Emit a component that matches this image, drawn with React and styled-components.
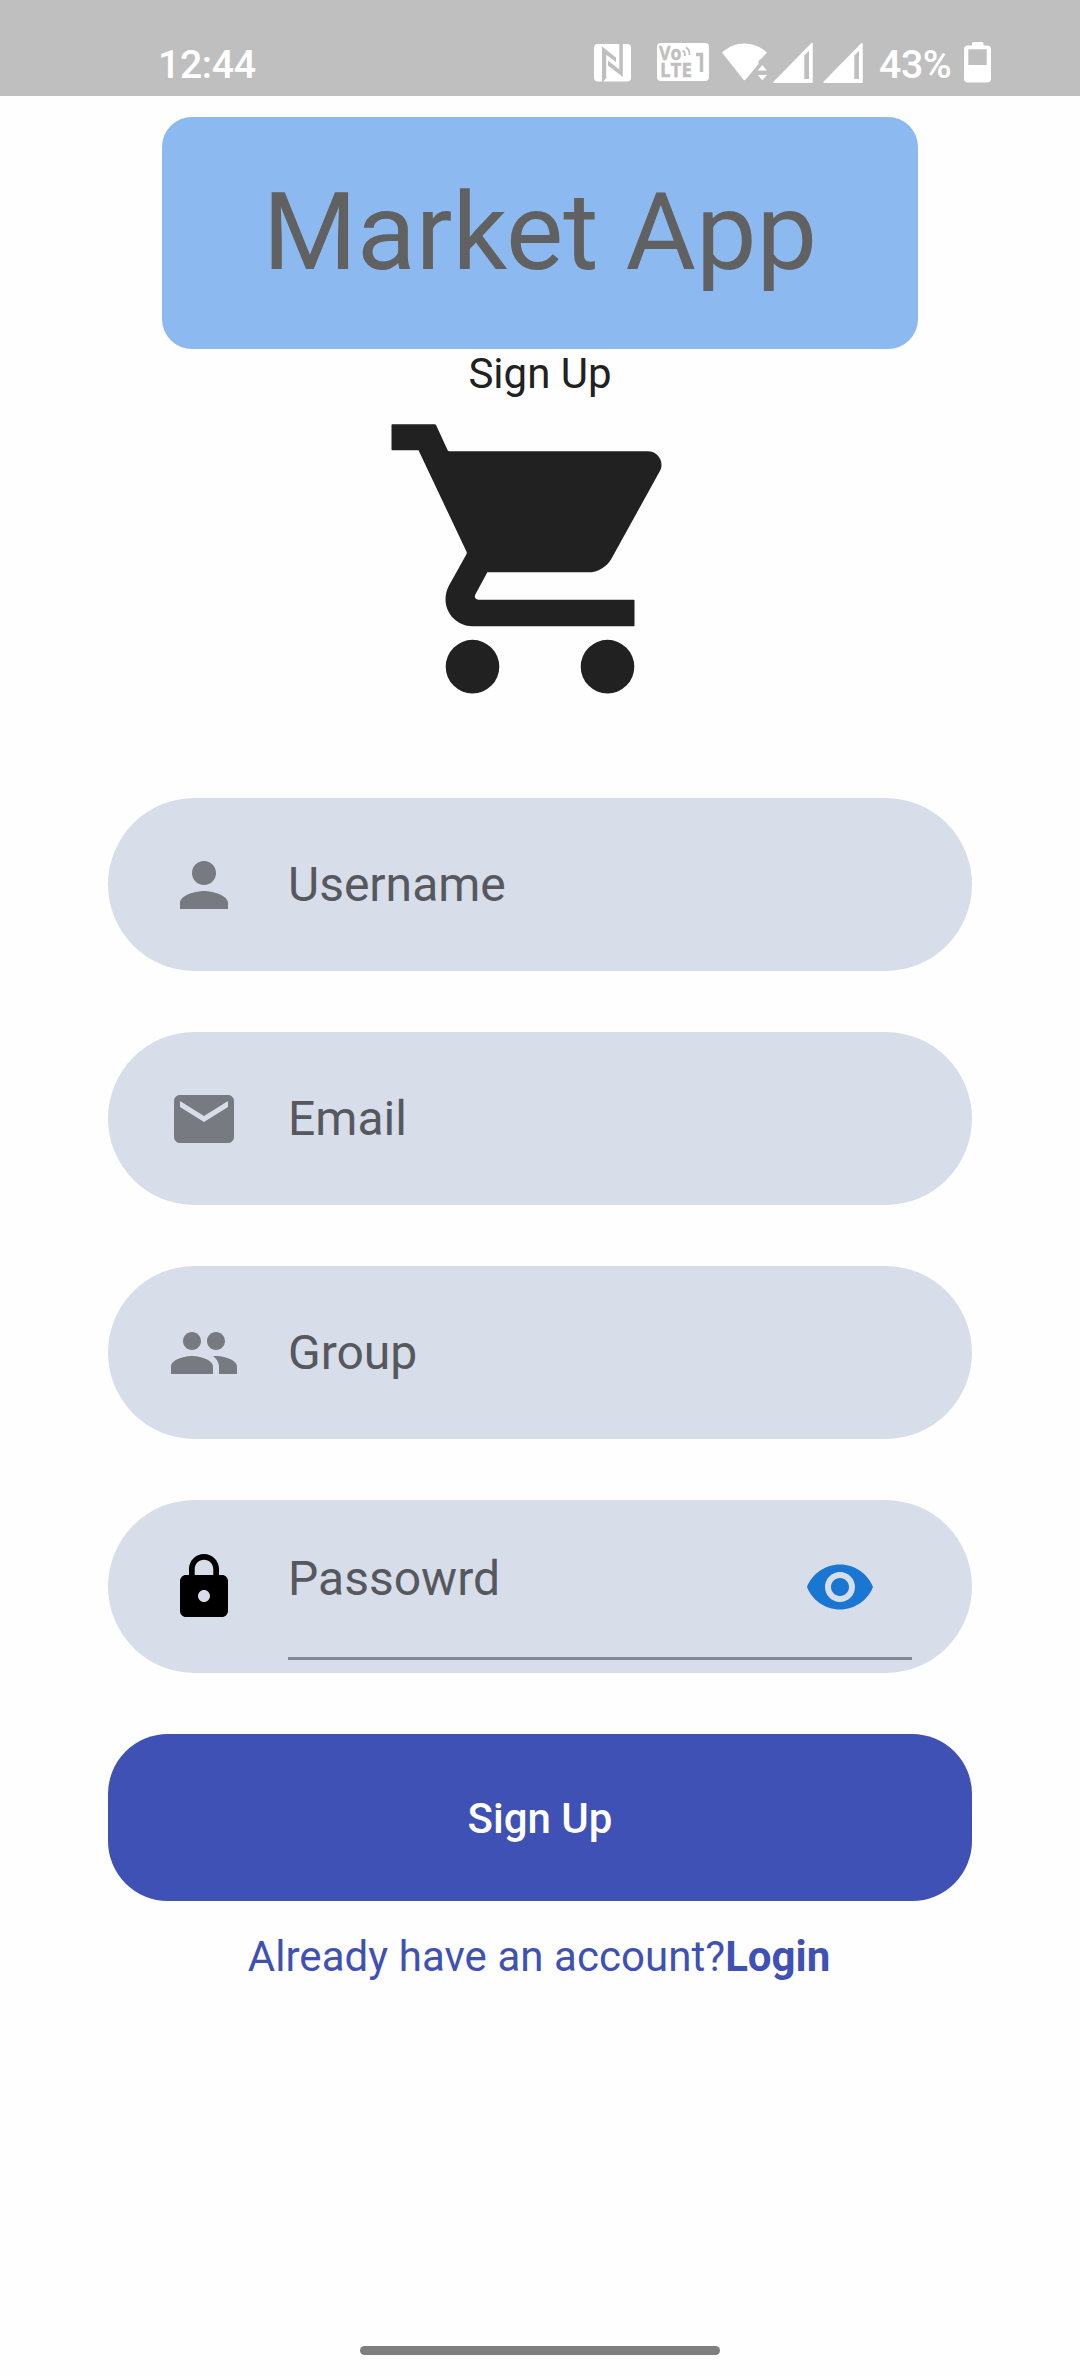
import React from "react";
import styled, { createGlobalStyle } from "styled-components";

const GlobalStyle = createGlobalStyle`
  *, *::before, *::after { box-sizing: border-box; }
  body { margin: 0; background: #fff; font-family: Roboto, "Noto Sans", sans-serif; }
  svg { display: block; flex: none; }
`;

const Screen = styled.div`
  display: flex;
  flex-direction: column;
  align-items: center;
  width: 1080px;
  height: 2376px;
  background: #fefefe;
`;

const StatusBar = styled.header`
  display: flex;
  align-items: flex-start;
  justify-content: space-between;
  width: 100%;
  height: 96px;
  padding: 40px 88px 0 158px;
  background: #bfbfbf;
  color: #fff;
`;

const StatusText = styled.span`
  width: ${(p) => p.$width}px;
  font-size: 39.3px;
  font-weight: 500;
  line-height: 50px;
  letter-spacing: -0.4px;
`;

const StatusIcons = styled.div`
  display: flex;
  align-items: flex-start;
  height: 48px;
`;

const IconSlot = styled.span`
  margin-right: ${(p) => p.$gap}px;
`;

const Banner = styled.h1`
  display: flex;
  align-items: center;
  justify-content: center;
  width: 756px;
  height: 232px;
  margin: 21px 0 0;
  padding-bottom: 2px;
  border-radius: 30px;
  background: #8cb9f0;
  color: #616161;
  font-size: 108px;
  font-weight: 400;
  line-height: 1.17;
`;

const Subtitle = styled.h2`
  height: 48px;
  margin: 0;
  color: #212121;
  font-size: 42px;
  font-weight: 400;
  line-height: 49px;
`;

const Form = styled.form`
  display: flex;
  flex-direction: column;
  gap: 61px;
  width: 864px;
  margin-top: 77px;
`;

const Field = styled.label`
  display: flex;
  align-items: center;
  height: 173px;
  padding: 0 60px;
  border-radius: 87px;
  background: #d7dde9;
  color: ${(p) => p.$iconColor || "#777a80"};
`;

const Input = styled.div`
  display: flex;
  align-items: center;
  flex: 1;
  height: 100%;
  margin-left: 48px;
  color: #56585d;
  font-size: 48px;
  line-height: 57px;
`;

const UnderlinedInput = styled(Input)`
  align-self: flex-start;
  justify-content: space-between;
  height: 160px;
  padding-right: 36px;
  border-bottom: 3px solid #868992;
`;

const VisibilityToggle = styled.span`
  margin-top: 17px;
  color: #1976d2;
`;

const SubmitButton = styled.button`
  height: 167px;
  padding: 2px 0 0;
  border: 0;
  border-radius: 60px;
  background: #3f51b5;
  color: #fff;
  font-family: inherit;
  font-size: 42px;
  font-weight: 500;
`;

const LoginPrompt = styled.p`
  margin: 31px 0 0;
  padding-right: 2px;
  color: #3f51b5;
  font-size: 42px;
  line-height: 49px;
  letter-spacing: 0.05px;
  white-space: nowrap;
`;

const LoginLink = styled.a`
  font-weight: 700;
  letter-spacing: 0;
`;

const NavHandle = styled.div`
  width: 360px;
  height: 9px;
  margin: auto 0 21px;
  border-radius: 5px;
  background: #7f7f7f;
`;

const Glyph = ({ d, size = 72, fill = "currentColor", viewBox = "0 0 24 24" }) => (
  <svg width={size} height={size} viewBox={viewBox} fill={fill}>
    <path d={d} />
  </svg>
);

const paths = {
  cart: "M7 17.95a1.98 1.98 0 1 0 0 3.97 1.98 1.98 0 1 0 0-3.97zM1.07 1.97Q1 1.97 1 2.04V3.83Q1 3.9 1.07 3.9H3L6.55 11.4Q6.6 11.5 6.55 11.61L5.25 13.95C5.09 14.25 5 14.61 5 14.95C5 16.05 5.9 16.95 7 16.95H18.93Q19 16.95 19 16.88V15.04Q19 14.97 18.93 14.97H7.42C7.28 14.97 7.17 14.86 7.17 14.72L7.2 14.6L8.1 12.95H15.55C16.3 12.95 16.96 12.54 17.3 11.92L20.88 5.45C20.96 5.31 21 5.14 21 4.97C21 4.42 20.55 3.97 20 3.97H5.3Q5.2 3.97 5.15 3.88L4.3 2.04Q4.27 1.97 4.2 1.97zM17 17.95a1.98 1.98 0 1 0 0 3.97 1.98 1.98 0 1 0 0-3.97z",
  person:
    "M12 12c2.21 0 4-1.79 4-4s-1.79-4-4-4-4 1.79-4 4 1.79 4 4 4zm0 2c-2.67 0-8 1.34-8 4v2h16v-2c0-2.66-5.33-4-8-4z",
  mail: "M20 4H4c-1.1 0-1.99.9-1.99 2L2 18c0 1.1.9 2 2 2h16c1.1 0 2-.9 2-2V6c0-1.1-.9-2-2-2zm0 4l-8 5-8-5V6l8 5 8-5v2z",
  people:
    "M16 11c1.66 0 2.99-1.34 2.99-3S17.66 5 16 5c-1.66 0-3 1.34-3 3s1.34 3 3 3zm-8 0c1.66 0 2.99-1.34 2.99-3S9.66 5 8 5C6.34 5 5 6.34 5 8s1.34 3 3 3zm0 2c-2.33 0-7 1.17-7 3.5V19h14v-2.5c0-2.33-4.67-3.5-7-3.5zm8 0c-.29 0-.62.02-.97.05 1.16.84 1.97 1.97 1.97 3.45V19h6v-2.5c0-2.33-4.67-3.5-7-3.5z",
  lock: "M18 8h-1V6c0-2.76-2.24-5-5-5S7 3.24 7 6v2H6c-1.1 0-2 .9-2 2v10c0 1.1.9 2 2 2h12c1.1 0 2-.9 2-2V10c0-1.1-.9-2-2-2zm-6 9c-1.1 0-2-.9-2-2s.9-2 2-2 2 .9 2 2-.9 2-2 2zm3.1-9H8.9V6c0-1.71 1.39-3.1 3.1-3.1 1.71 0 3.1 1.39 3.1 3.1v2z",
  eye: "M12 4.5C7 4.5 2.73 7.61 1 12c1.73 4.39 6 7.5 11 7.5s9.27-3.11 11-7.5c-1.73-4.39-6-7.5-11-7.5zM12 17c-2.76 0-5-2.24-5-5s2.24-5 5-5 5 2.24 5 5-2.24 5-5 5zm0-8c-1.66 0-3 1.34-3 3s1.34 3 3 3 3-1.34 3-3-1.34-3-3-3z",
};

const NfcIcon = () => (
  <svg width="38" height="46" viewBox="594 40 38 46">
    <rect x="594" y="44" width="37" height="37.5" rx="4" fill="#fff" />
    <path
      d="M602 82V46.5L616 57.5V62L606.2 54.8V78L603 82zM608 60.5L619.3 69.6V44H622.8V77L608 65.5z"
      fill="#bfbfbf"
    />
  </svg>
);

const VolteIcon = () => (
  <svg width="52" height="46" viewBox="657 40 52 46" fontFamily="Open Sans, sans-serif" fontWeight="700">
    <rect x="657" y="43" width="52" height="38" rx="4" fill="#fff" />
    <g fill="#bfbfbf" stroke="#bfbfbf" strokeWidth="0.4">
      <text x="659" y="59.800" fontSize="19" textLength="22.500" lengthAdjust="spacingAndGlyphs">Vo</text>
      <text x="660" y="77" fontSize="19" textLength="32" lengthAdjust="spacingAndGlyphs">LTE</text>
    </g>
    <g fill="none" stroke="#bfbfbf">
      <path d="M682.500 50.500q3 1.500 2.500 5.500M686 47.500q4 2.500 3.500 7.500" strokeWidth="1.800" />
      <path d="M696 54.500h5.500V72" strokeWidth="3.500" />
    </g>
  </svg>
);

const WifiIcon = () => (
  <svg width="46" height="46" viewBox="722 40 46 46" fill="#fff">
    <path d="M744.500 43.500c-8.500 0-16 3.200-22.500 9l21.300 27q1.200 1.300 2.400 0L758.500 64v-3l3.500-3 5-5.500c-6.500-5.800-14-9-22.500-9z" />
    <path d="M757.700 70.500l4.600-5.500 4.600 5.500zM757.700 75h9.200l-4.600 5.300z" />
  </svg>
);

const SignalIcon = () => (
  <svg width="40" height="46" viewBox="773 40 40 46">
    <path d="M774 82.300L812 43.500V82.300z" fill="#fff" stroke="#fff" strokeWidth="1.500" strokeLinejoin="round" />
    <path d="M804.300 55.500l4.700-4.800V79h-4.700z" fill="#bfbfbf" />
  </svg>
);

const BatteryIcon = () => (
  <svg width="28" height="46" viewBox="964 40 28 46">
    <rect x="964" y="45.500" width="27" height="37" rx="4" fill="#fff" />
    <rect x="972" y="42" width="11.500" height="6" rx="1.500" fill="#fff" />
    <rect x="968.300" y="49.300" width="18.400" height="15.700" fill="#bfbfbf" />
  </svg>
);

export default function App() {
  return (
    <>
      <GlobalStyle />
      <Screen>
        <StatusBar>
          <StatusText $width={110}>12:44</StatusText>
          <StatusIcons>
            <IconSlot $gap={25}><NfcIcon /></IconSlot>
            <IconSlot $gap={13}><VolteIcon /></IconSlot>
            <IconSlot $gap={5}><WifiIcon /></IconSlot>
            <IconSlot $gap={10}><SignalIcon /></IconSlot>
            <IconSlot $gap={16}><SignalIcon /></IconSlot>
            <StatusText $width={85}>43%</StatusText>
            <BatteryIcon />
          </StatusIcons>
        </StatusBar>
        <Banner>Market App</Banner>
        <Subtitle>Sign Up</Subtitle>
        <Glyph d={paths.cart} size={324} fill="#212121" viewBox="0 -0.04 24 24" />
        <Form>
          <Field>
            <Glyph d={paths.person} />
            <Input>Username</Input>
          </Field>
          <Field>
            <Glyph d={paths.mail} />
            <Input>Email</Input>
          </Field>
          <Field>
            <Glyph d={paths.people} />
            <Input>Group</Input>
          </Field>
          <Field $iconColor="#000">
            <Glyph d={paths.lock} />
            <UnderlinedInput>
              Passowrd
              <VisibilityToggle>
                <Glyph d={paths.eye} />
              </VisibilityToggle>
            </UnderlinedInput>
          </Field>
          <SubmitButton type="button">Sign Up</SubmitButton>
        </Form>
        <LoginPrompt>
          Already have an account?<LoginLink>Login</LoginLink>
        </LoginPrompt>
        <NavHandle />
      </Screen>
    </>
  );
}
